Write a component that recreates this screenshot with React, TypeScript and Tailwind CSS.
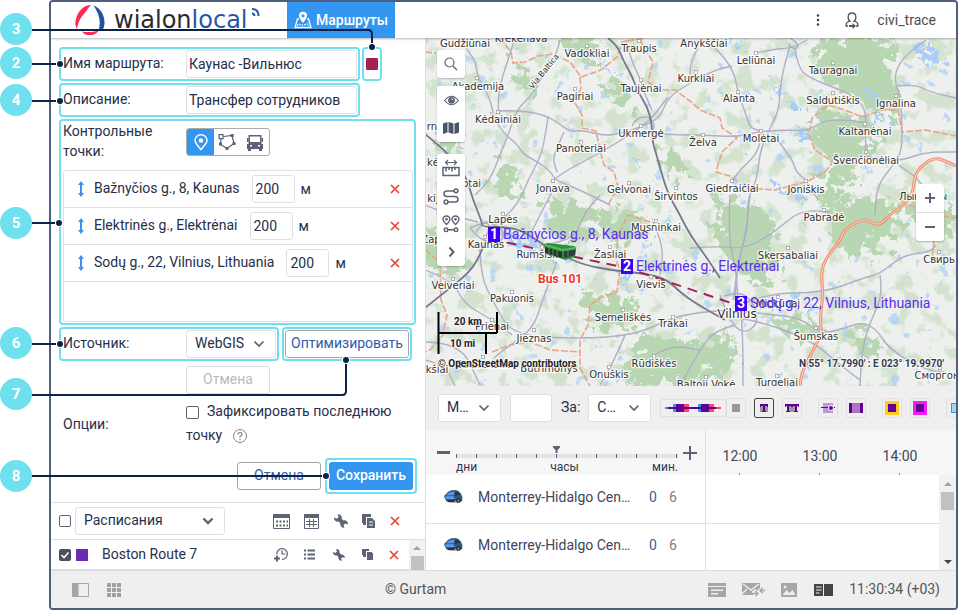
import type { ReactNode } from 'react';

type Place = { name: string; x: number; y: number; dot?: [number, number]; size?: number };

const places: Place[] = [
  { name: 'Gudžiūnai', x: 465, y: 47 },
  { name: 'Krekenava', x: 521, y: 42 },
  { name: 'Vadokliai', x: 587, y: 57, dot: [587, 46] },
  { name: 'Traupis', x: 639, y: 52, dot: [639, 41] },
  { name: 'Anykščiai', x: 704, y: 47 },
  { name: 'Leliūnai', x: 756, y: 64, dot: [756, 53] },
  { name: 'Tauragnai', x: 833, y: 74, dot: [833, 63] },
  { name: 'Akademija', x: 478, y: 90, dot: [477, 78] },
  { name: 'Kurkliai', x: 696, y: 82, dot: [696, 72] },
  { name: 'Taujėnai', x: 641, y: 92, dot: [641, 80] },
  { name: 'Alanta', x: 739, y: 102, dot: [738, 92] },
  { name: 'Saldutiškis', x: 833, y: 104, dot: [833, 93] },
  { name: 'Ignalina', x: 896, y: 107, dot: [896, 96] },
  { name: 'Pagiriai', x: 575, y: 100, dot: [575, 89] },
  { name: 'Kėdainiai', x: 498, y: 123, dot: [498, 112] },
  { name: 'Kaltanėnai', x: 865, y: 135, dot: [865, 124] },
  { name: 'Ukmergė', x: 641, y: 137, dot: [641, 126] },
  { name: 'Želva', x: 703, y: 146, dot: [703, 135] },
  { name: 'Molėtai', x: 761, y: 142, dot: [761, 131] },
  { name: 'Panoteriai', x: 581, y: 152, dot: [581, 142] },
  { name: 'Švenčionėliai', x: 866, y: 164, dot: [866, 152] },
  { name: 'rna', x: 435, y: 130 },
  { name: 'kė', x: 433, y: 166 },
  { name: 'kij', x: 433, y: 202 },
  { name: 'Žap', x: 431, y: 243 },
  { name: 'Babtai', x: 465, y: 187 },
  { name: 'Jonava', x: 553, y: 192, dot: [553, 181] },
  { name: 'Gelvonai', x: 629, y: 193, dot: [629, 183] },
  { name: 'Širvintos', x: 676, y: 200, dot: [676, 188] },
  { name: 'Giedraičiai', x: 732, y: 192, dot: [732, 181] },
  { name: 'Joniškis', x: 806, y: 193, dot: [806, 181] },
  { name: 'Лынтупы', x: 923, y: 200 },
  { name: 'Lapės', x: 503, y: 223, dot: [503, 214] },
  { name: 'Musninkai', x: 656, y: 231, dot: [656, 221] },
  { name: 'Pabradė', x: 824, y: 221, dot: [824, 210] },
  { name: 'Kaunas', x: 486, y: 248, dot: [485, 237], size: 10 },
  { name: 'Rumšiškės', x: 543, y: 258, dot: [542, 247] },
  { name: 'Žasliai', x: 610, y: 258, dot: [610, 247] },
  { name: 'Skersabaliai', x: 788, y: 259, dot: [788, 248] },
  { name: 'Свирь', x: 939, y: 263, dot: [939, 252] },
  { name: 'Veiveriai', x: 453, y: 289, dot: [453, 279] },
  { name: 'Vievis', x: 651, y: 288, dot: [651, 277] },
  { name: 'Pakuonis', x: 512, y: 302, dot: [512, 292] },
  { name: 'Mickūnai', x: 778, y: 307, dot: [778, 297] },
  { name: 'Vilnius', x: 737, y: 318, size: 12 },
  { name: 'Semeliškės', x: 623, y: 321, dot: [623, 310] },
  { name: 'Trakai', x: 673, y: 327, dot: [673, 317] },
  { name: 'Prienai', x: 492, y: 330, dot: [492, 320] },
  { name: 'Jieznas', x: 534, y: 342, dot: [534, 330] },
  { name: 'Šumskas', x: 816, y: 340, dot: [816, 328] },
  { name: 'Balbieriškis', x: 484, y: 368, dot: [483, 357] },
  { name: 'kšiai', x: 437, y: 373 },
  { name: 'Butrimonys', x: 549, y: 372, dot: [549, 361] },
  { name: 'Onuškis', x: 609, y: 378, dot: [609, 367] },
  { name: 'Rūdiškės', x: 654, y: 367, dot: [654, 356] },
  { name: 'Сморгонь', x: 940, y: 379, dot: [940, 368] },
  { name: 'Baltoji Vokė', x: 706, y: 388, dot: [706, 377] },
  { name: 'Turgeliai', x: 777, y: 386, dot: [777, 376] },
];

const roads = [
  '515,38 506,66 499,88 498,110 500,114',
  '462,40 468,52 475,60 478,78 490,98 494,118',
  '560,40 556,57 543,75 532,95 517,109 510,130 500,155 490,180 475,195',
  '498,111 518,110 545,115 560,124 570,132 582,130 605,136 622,133 641,127 660,118 668,97 690,83 715,70 732,66',
  '490,112 502,132 517,144 524,155 538,162 551,172 555,180 580,190 610,205',
  '548,117 544,145 538,162 528,180 520,200 505,218 490,228',
  '564,132 556,150 553,160 557,172',
  '553,181 560,174 590,158 612,146 641,127 652,118 668,97',
  '626,40 631,60 640,78 644,92 652,110',
  '790,46 781,75 779,110 772,124 760,150 757,180 747,200 748,230 738,260 735,300',
  '756,53 775,49 792,48 807,40',
  '795,48 798,68 810,78 835,88 850,94 862,104 866,115 865,124 866,152',
  '790,38 800,44 795,50 788,44',
  '715,48 732,65 738,92 746,115 750,128 761,131',
  '698,48 690,62 690,83',
  '641,132 672,135 703,135 738,137 761,131 790,130 808,131 824,120 850,120 865,123',
  '775,137 792,158 796,172 806,180 818,200',
  '761,131 761,150 740,170 732,181',
  '926,40 905,55 895,72 896,87 900,94 902,120 902,150 895,163 877,185 875,215',
  '897,86 915,84 930,92 956,98',
  '860,155 895,163 925,152 956,152',
  '895,163 915,175 925,190',
  '480,245 480,275 495,305 512,335 578,339 635,335 672,318 700,312 733,310',
  '557,262 543,298 533,330 500,352 484,368',
  '425,270 452,280 465,305 490,318 512,335',
  '545,245 575,240 583,215 600,195',
  '553,190 540,215 530,235',
  '425,342 460,342 480,385',
  '653,222 664,245 660,275',
  '625,335 612,365 600,385',
  '653,356 670,345 700,350',
  '730,195 728,235 736,270 738,300',
  '750,195 747,228 738,265 733,300',
  '690,248 720,246 745,249 775,232 800,210 830,212',
  '740,305 767,293 823,293 863,278 880,274 903,255 930,252 936,245',
  '740,318 760,322 790,332 817,345 840,365 860,380',
  '745,312 770,314 800,318 822,334 845,328 863,322 877,330 890,350 925,370 945,372',
  '880,275 883,295 870,322 862,350 860,386',
  '741,312 743,340 743,386',
  '735,325 715,330 700,350 680,386',
  '720,295 728,318 742,334 758,325 755,305 742,292 724,296',
  '470,228 480,240 495,244 505,238 500,226 484,222 470,228',
  '476,232 486,218 490,228 484,240',
  '425,205 450,215 478,222',
  '425,360 445,365 455,386',
  '632,126 636,118 650,116 656,128 646,134 634,132',
];

const highways = [
  '608,38 617,45 623,60 632,76 638,92 648,108 652,125 652,140 658,160 667,192 680,215 690,235 705,255 720,278',
  '425,134 445,150 465,173 473,200 482,222 482,227 508,227 525,232 545,246 568,258 585,265 610,270 640,273 665,278 680,292 695,303 725,320',
  '425,308 445,292 470,272 480,255 486,240',
];

const mainRoad =
  '956,166 950,163 935,157 922,165 915,175 914,185 911,198 900,208 890,214 883,223 875,225 865,218 848,227 842,234 840,241 826,258 821,272 823,295 820,320 822,334 812,352 802,372 800,386';

const borders = [
  '425,52 436,53',
  '500,38 511,52 513,63 525,62 538,56 553,54 570,62 581,77 601,70 617,57 622,42 645,38',
  '580,77 581,88 575,103 582,115 582,128 596,131 600,150 604,165 614,172 618,187 608,205',
  '640,40 653,62 648,82 660,90 675,90 690,101 700,110 720,118 722,128 737,138 722,152 716,172 730,176 747,188 775,190 806,182 825,172 833,162 815,150 809,135 812,118 828,105 845,110 862,117 882,110 898,110 902,132 925,130 956,136',
  '650,222 628,215 618,235 616,260 620,270 617,292 600,298 590,305 588,325 580,340 580,368 590,386',
  '425,250 440,262 441,300 447,315 443,335 430,350 425,352',
  '492,352 510,345 530,342 550,350 580,352',
  '908,205 925,210 940,216 956,218',
  '934,240 932,260',
];

const forests = [
  'M820 38 L895 38 L890 75 L905 100 L885 118 L850 95 L815 75 Z',
  'M815 108 L850 115 L880 125 L860 165 L835 205 L812 198 L835 165 L812 140 Z',
  'M518 64 L530 66 L528 92 L516 88 Z',
  'M610 75 L632 85 L628 105 L608 100 Z',
  'M560 38 L600 38 L590 60 L565 50 Z',
  'M660 148 L678 152 L690 172 L665 178 Z',
  'M548 200 L600 205 L590 235 L560 240 L545 225 Z',
  'M720 200 L760 205 L780 235 L770 285 L740 275 L715 240 Z',
  'M825 205 L870 195 L905 205 L890 235 L850 262 L835 240 Z',
  'M425 225 L445 235 L470 260 L455 275 L425 265 Z',
  'M640 335 L690 340 L700 386 L625 386 L630 355 Z',
  'M690 345 L735 335 L730 370 L695 380 Z',
  'M850 330 L880 335 L875 355 L855 352 Z',
  'M500 160 L520 170 L512 200 L492 192 Z',
  'M770 320 L815 318 L825 335 L790 340 Z',
  'M585 295 L640 300 L630 325 L590 330 Z',
  'M440 135 L458 140 L455 158 L440 155 Z',
  'M900 195 L956 205 L956 235 L915 225 Z',
  'M600 215 L645 210 L640 240 L605 238 Z',
];

const lakes = [
  'M915 46 L935 44 L940 58 L922 64 Z',
  'M732 40 L742 40 L738 50 L731 47 Z',
  'M600 60 L608 64 L604 70 Z',
  'M636 160 L641 158 L640 170 Z',
  'M770 85 L785 88 L776 95 Z',
  'M800 128 L812 132 L806 146 L797 140 Z',
  'M870 90 L880 95 L874 105 Z',
  'M878 115 L888 112 L880 130 L874 126 Z',
  'M622 265 L628 270 L627 292 L622 286 Z',
  'M505 236 L530 240 L545 248 L520 250 L505 243 Z',
  'M806 308 L815 310 L812 316 L804 315 Z',
  'M770 180 L782 184 L775 190 Z',
  'M795 190 L806 196 L799 204 Z',
  'M788 100 L800 106 L792 112 Z',
];

const callouts = [
  { n: 3, className: 'top-[13px]' },
  { n: 2, className: 'top-[47px]' },
  { n: 4, className: 'top-[84px]' },
  { n: 5, className: 'top-[207px]' },
  { n: 6, className: 'top-[327px]' },
  { n: 7, className: 'top-[378px]' },
  { n: 8, className: 'top-[460px]' },
];

const calloutLines = [
  { d: 'M32 30H368Q372 30 372 34V47', x: 372, y: 47 },
  { d: 'M32 64H60', x: 60, y: 64 },
  { d: 'M32 101H60', x: 60, y: 101 },
  { d: 'M32 223H59', x: 59, y: 223 },
  { d: 'M32 344H60', x: 60, y: 344 },
  { d: 'M32 395H342Q346 395 346 391V360', x: 346, y: 360 },
  { d: 'M32 476H326', x: 326, y: 476 },
];

const checkpoints = [
  { name: 'Bažnyčios g., 8, Kaunas', radius: 200 },
  { name: 'Elektrinės g., Elektrėnai', radius: 200 },
  { name: 'Sodų g., 22, Vilnius, Lithuania', radius: 200 },
];

const units = ['Monterrey-Hidalgo Cen…', 'Monterrey-Hidalgo Cen…'];
const hours = ['12:00', '13:00', '14:00'];

// Turns a list of points into a curve that passes through the segment midpoints
function smooth(points: string): string {
  const pts = points.split(' ').map((p) => p.split(',').map(Number));
  let d = `M${pts[0][0]} ${pts[0][1]}`;
  for (let i = 1; i < pts.length - 1; i++) {
    const [x, y] = pts[i];
    const [nx, ny] = pts[i + 1];
    d += `Q${x} ${y} ${(x + nx) / 2} ${(y + ny) / 2}`;
  }
  const last = pts[pts.length - 1];
  return `${d}L${last[0]} ${last[1]}`;
}

function Chevron({ bold = false }: { bold?: boolean }) {
  return (
    <svg width="12" height="8" viewBox="0 0 12 8" fill="none" stroke="#5b6375" strokeWidth={bold ? 2.4 : 1.7} className="shrink-0">
      <path d="M1.5 1.5 6 6l4.5-4.5" />
    </svg>
  );
}

function Cross() {
  return (
    <svg width="10" height="10" viewBox="0 0 10 10" stroke="#ee4136" strokeWidth="1.7">
      <path d="m1 1 8 8M9 1 1 9" />
    </svg>
  );
}

function Wrench({ size = 14 }: { size?: number }) {
  return (
    <svg width={size} height={size} viewBox="0 0 14 14" fill="#5b6375">
      <path d="M0 3.600 2.800 4.700 4.600 3 3.700.2C6.300-.3 8.300 2 7.700 4.700l1.800 1.700c2.600-.5 4.600 1.600 4.300 4.100l-2.600-1-1.700 1.500.9 2.800c-2.500.4-4.500-1.800-4-4.300L4.700 7.600C2.200 8.200-.2 6.200 0 3.600Z" />
    </svg>
  );
}

function IconButton({ label, className, children }: { label: string; className: string; children: ReactNode }) {
  return (
    <button type="button" aria-label={label} className={`flex shrink-0 items-center justify-center ${className}`}>
      {children}
    </button>
  );
}

function Frame({ className = '', children }: { className?: string; children: ReactNode }) {
  return <div className={`rounded border-2 border-[#6ee0ee] ${className}`}>{children}</div>;
}

function Select({ label, value, className, bold }: { label: string; value: string; className: string; bold?: boolean }) {
  return (
    <div className={`relative flex h-7 items-center rounded-[3px] border border-[#dfe0e2] bg-white ${className}`}>
      <select aria-label={label} className="h-full w-full appearance-none bg-transparent pb-0.5 pl-2 text-[14px] outline-none">
        <option>{value}</option>
      </select>
      <span className="pointer-events-none absolute right-[10px]">
        <Chevron bold={bold} />
      </span>
    </div>
  );
}

function Logo() {
  return (
    <div className="flex items-start pl-6">
      <svg width="31" height="31" viewBox="0 0 31 31" className="mt-[2px] shrink-0">
        <path d="M16 1C8 1 2 8 .500 17c-.3 3 0 6 1.500 8 1-7 4-12 7-15 2.500-3 4-6 7-9Z" fill="#fb2c50" />
        <path d="M18.500 1.500c6.500 2 11 9 11 17 0 3-.8 6-2 8l-3.500-2c2-7 0-15-5.500-23Z" fill="#2053a4" />
        <path d="M7 27.500c5 1 11 1 17-1.500-3 6-13 7.500-17 1.500Z" fill="#fb2c50" />
      </svg>
      <span className="ml-2 font-['DejaVu_Sans'] text-[24px] leading-9 text-[#2b2930]">
        wialon<span className="text-[#2457a8]">local</span>
      </span>
      <svg width="8" height="8" viewBox="0 0 8 8" fill="none" stroke="#2457a8" strokeWidth="2" className="mt-1.5 ml-1 shrink-0">
        <path d="M0 1c4 0 6.500 2.500 6.500 7M0 5.500c1.500 0 2.500 1 2.500 2.500" />
      </svg>
    </div>
  );
}

function Header() {
  return (
    <header className="relative z-10 flex h-9 shrink-0 bg-white shadow-[0_1px_2px_rgba(0,0,0,0.3)]">
      <div className="w-[236px] overflow-hidden">
        <Logo />
      </div>
      <button type="button" className="flex h-full w-[108px] items-center gap-1 bg-[#3396f0] pl-[7px] text-[14px] font-medium text-white">
        <svg width="18" height="18" viewBox="0 0 18 18" fill="none" stroke="#fff" strokeWidth="1.3">
          <path d="M5 8H3.500L1 16.500h16L14.500 8H13" />
          <path d="M9 12C6.500 8.500 5 7 5 4.800a4 4 0 0 1 8 0C13 7 11.500 8.500 9 12Z" fill="#fff" stroke="none" />
          <circle cx="9" cy="4.800" r="1.600" fill="#3396f0" stroke="none" />
          <path d="M3 14.500c3-3 5 1 8-1 1.500-1 3-.5 4 1" strokeDasharray="1.500 1" />
        </svg>
        Маршруты
      </button>
      <div className="ml-auto flex items-center pr-5 text-[14px] text-[#4d4d4d]">
        <IconButton label="Меню" className="mr-[15px] h-7 w-6">
          <svg width="4" height="12" viewBox="0 0 4 12" fill="#444">
            <circle cx="2" cy="1.500" r="1.300" />
            <circle cx="2" cy="6" r="1.300" />
            <circle cx="2" cy="10.500" r="1.300" />
          </svg>
        </IconButton>
        <svg width="14" height="17" viewBox="0 0 14 17" fill="none" stroke="#555" strokeWidth="1.300" className="mr-[18px]">
          <path d="M3 14H1c0-3.500 1.200-4 4-4.800C2.500 7.500 2 1 7 1s4.500 6.500 2 8.200c2.800.8 4 1.300 4 4.800h-2" />
          <path d="M4 14h4" strokeWidth="1.800" />
          <path d="m7.500 11 3.500 3-3.500 3Z" fill="#555" stroke="none" />
        </svg>
        civi_trace
      </div>
    </header>
  );
}

function Checkpoints() {
  return (
    <Frame className="w-[357px] p-px pl-0.5">
      <div className="flex h-12">
        <div className="-mt-px w-[123px] leading-5">
          Контрольные
          <br />
          точки:
        </div>
        <div className="mt-1.5 flex h-7 w-[84px] overflow-hidden rounded-[3px] border border-[#a9abb0]">
          <IconButton label="Точка" className="w-[27px] bg-[#3396f0]">
            <svg width="14" height="17" viewBox="0 0 14 17" fill="none" stroke="#fff" strokeWidth="1.500">
              <path d="M7 15.500C3.500 11.500 1 9 1 6.500a6 5.700 0 0 1 12 0C13 9 10.500 11.500 7 15.500Z" />
              <circle cx="7" cy="6.500" r="1.600" fill="#fff" />
            </svg>
          </IconButton>
          <IconButton label="Геозона" className="w-[26px]">
            <svg width="18" height="18" viewBox="0 0 18 18" fill="none" stroke="#5b6375" strokeWidth="1.200">
              <path d="M5.500 3.500 14 2.500l2 8-7 5-6.500-4L3 6" />
              <path d="M1.100 1.600h4v4h-4z" />
              <path d="M12.700 1h3v3h-3zM14.500 9h3v3h-3zM7.500 14h3v3h-3zM1 9.500h3v3H1z" fill="#5b6375" stroke="none" />
            </svg>
          </IconButton>
          <IconButton label="Остановка" className="w-[30px]">
            <svg width="16" height="17" viewBox="0 0 16 17" fill="#5b6375">
              <path fillRule="evenodd" d="M1.500 1h13v9l1.500 0v5h-1v2h-3v-2H4v2H1v-2H0v-5h1.500ZM3 2.500V8h10V2.500ZM3 11v1.500h2V11Zm8 0v1.500h2V11Z" />
              <path d="M0 4h1.500v4H0zM14.500 4H16v4h-1.500z" />
            </svg>
          </IconButton>
        </div>
      </div>
      <ul className="h-[152px] w-[350px] rounded-[3px] border border-[#dfe0e2]">
        {checkpoints.map((point) => (
          <li key={point.name} className="flex h-[37px] items-center border-b border-[#dfe0e2] pr-3 pl-[13px]">
            <svg width="8" height="16" viewBox="0 0 8 16" fill="#3d8ff0" className="mr-[9px] shrink-0">
              <path d="M4 0 7 4H5v8h2l-3 4-3-4h2V4H1Z" />
            </svg>
            <span className="-mt-0.5">{point.name}</span>
            <input
              type="text"
              aria-label={`Радиус ${point.name}`}
              defaultValue={point.radius}
              className="mr-1.5 ml-3 h-7 w-[43px] rounded-[3px] border border-[#dfe0e2] px-[3px] text-[14px] outline-none"
            />
            м
            <IconButton label={`Удалить ${point.name}`} className="ml-auto">
              <Cross />
            </IconButton>
          </li>
        ))}
      </ul>
    </Frame>
  );
}

function RoutePanel() {
  const field = 'h-7 w-[171px] rounded-[3px] border border-[#dfe0e2] px-0.5 text-[14px] outline-none';
  const label = 'w-[123px] pb-0.5';
  return (
    <section className="flex w-[375px] shrink-0 flex-col border-r border-[#dcdde0] bg-white">
      <form className="flex flex-col items-start gap-0.5 pt-[9px] pr-2 pl-2" onSubmit={(e) => e.preventDefault()}>
        <div className="flex gap-0.5">
          <Frame className="flex items-center p-px pl-0.5">
            <label htmlFor="route-name" className={label}>Имя маршрута:</label>
            <input id="route-name" type="text" defaultValue="Каунас -Вильнюс" className={field} />
          </Frame>
          <Frame className="flex w-5 items-center justify-center">
            <button type="button" aria-label="Цвет маршрута" className="size-3 shrink-0 rounded-[1px] bg-[#a42152]" />
          </Frame>
        </div>
        <Frame className="flex items-center p-px pl-0.5">
          <label htmlFor="route-desc" className={label}>Описание:</label>
          <input id="route-desc" type="text" defaultValue="Трансфер сотрудников" className={field} />
        </Frame>
        <Checkpoints />
        <div className="flex gap-[3px]">
          <Frame className="flex items-center p-px pl-0.5">
            <span className={label}>Источник:</span>
            <Select label="Источник" value="WebGIS" className="w-[90px]" />
          </Frame>
          <Frame className="p-px">
            <button type="button" className="block h-7 w-[124px] rounded-[3px] border border-[#a3a5aa] pb-0.5 text-[14px] text-[#2f5ca8]">
              Оптимизировать
            </button>
          </Frame>
        </div>
        <button type="button" disabled className="mt-[3px] ml-[127px] h-7 w-[84px] rounded-[3px] border border-[#dfe0e2] pb-0.5 text-[#b9bbbf]">
          Отмена
        </button>
        <div className="mt-[3px] flex items-center pl-1">
          <span className="w-[123px] pt-0.5">Опции:</span>
          <div className="w-[220px] leading-6">
            <input id="fix-last" type="checkbox" className="mr-2 size-[13px] appearance-none rounded-[2px] border border-[#5b6375] align-[-3px]" />
            <label htmlFor="fix-last">Зафиксировать последнюю точку</label>
            <svg width="14" height="14" viewBox="0 0 14 14" className="ml-[11px] inline-block align-[-3px]">
              <circle cx="7" cy="7" r="6.500" fill="none" stroke="#7d828c" />
              <path d="M5 5.500q0-2 2-2t2 1.800Q9 6.500 7 7.500v1.200M7 10v1.200" fill="none" stroke="#7d828c" strokeWidth="1.200" />
            </svg>
          </div>
        </div>
        <div className="mt-[9px] mb-2 flex items-center gap-1 self-end">
          <button type="button" className="h-7 w-[84px] rounded-[3px] border border-[#a3a5aa] pb-0.5 text-[#2f5ca8]">Отмена</button>
          <Frame className="p-0.5">
            <button type="submit" className="block h-7 w-[84px] rounded-[3px] bg-[#3396f0] pb-0.5 font-medium text-white">Сохранить</button>
          </Frame>
        </div>
      </form>

      <div className="flex h-[38px] shrink-0 items-center border-t border-b border-[#dfe0e2] pl-2">
        <input type="checkbox" aria-label="Выбрать все маршруты" className="mr-1 size-3 appearance-none rounded-[2px] border border-[#5b6375]" />
        <Select label="Раздел" value="Расписания" className="w-[150px]" bold />
        <div className="ml-auto flex items-center">
          <IconButton label="Календарь" className="w-[30px]">
            <svg width="17" height="15" viewBox="0 0 17 15">
              <path d="M.5.5h16v14H.5z" fill="#fff" stroke="#5b6375" />
              <path d="M0 0h17v4H0z" fill="#5b6375" />
              <path d="M3 7.500h12M3 11.500h12" stroke="#5b6375" strokeWidth="2" strokeDasharray="2 1.500" />
            </svg>
          </IconButton>
          <IconButton label="Таблица" className="w-[30px]">
            <svg width="15" height="15" viewBox="0 0 15 15">
              <path d="M.5.5h14v14H.5z" fill="#fff" stroke="#5b6375" />
              <path d="M0 0h15v4H0z" fill="#5b6375" />
              <path d="M2 7.500h11M2 10.500h11M5.500 5v8M9.500 5v8" stroke="#5b6375" />
            </svg>
          </IconButton>
          <IconButton label="Свойства" className="w-[29px]">
            <Wrench />
          </IconButton>
          <IconButton label="Копировать" className="w-[27px]">
            <svg width="13" height="14" viewBox="0 0 13 14" fill="#5b6375">
              <path d="M0 0h9v3H4v8H1V9H0Z" />
              <path fillRule="evenodd" d="M5 4h5l3 3v7H5Zm2 3.500v1h4v-1Zm0 3v1h4v-1Z" />
            </svg>
          </IconButton>
          <IconButton label="Удалить все" className="mr-[17px] w-[26px]">
            <Cross />
          </IconButton>
        </div>
      </div>

      <div className="flex min-h-0 flex-1">
        <div className="min-w-0 flex-1">
          <div className="flex h-[30px] items-center border-b border-[#dfe0e2] pl-2">
            <span className="relative flex size-3">
              <input type="checkbox" defaultChecked aria-label="Boston Route 7" className="size-3 appearance-none rounded-[2px] bg-[#4a5060]" />
              <svg width="12" height="12" viewBox="0 0 12 12" fill="none" stroke="#fff" strokeWidth="1.600" className="pointer-events-none absolute inset-0">
                <path d="m2.500 6 2.500 2.500 4.500-5" />
              </svg>
            </span>
            <span className="ml-[5px] size-3 bg-[#6a2bb5]" />
            <span className="ml-3.5 pb-0.5">Boston Route 7</span>
            <div className="ml-auto flex items-center">
              <IconButton label="Добавить расписание" className="w-[30px]">
                <svg width="15" height="15" viewBox="0 0 15 15" fill="none" stroke="#5b6375" strokeWidth="1.200">
                  <path d="M2.800 7a5.300 5.300 0 1 1 5.200 5.300" />
                  <path d="M8 3.500V7h3.500" />
                  <path d="M0 11.500h6M3 8.500v6" strokeWidth="2" />
                </svg>
              </IconButton>
              <IconButton label="Рейсы" className="w-[27px]">
                <svg width="11" height="11" viewBox="0 0 11 11" stroke="#5b6375" strokeWidth="2">
                  <path d="M0 1.500h2M3.500 1.500H11M0 5.500h2M3.500 5.500H11M0 9.500h2M3.500 9.500H11" />
                </svg>
              </IconButton>
              <IconButton label="Свойства маршрута" className="w-8">
                <Wrench size={12} />
              </IconButton>
              <IconButton label="Копировать маршрут" className="w-6">
                <svg width="11" height="11" viewBox="0 0 11 11" fill="#5b6375">
                  <path d="M0 0h7v2H4v6H1V6H0ZM5 3h5v1h1v7H5Z" />
                </svg>
              </IconButton>
              <IconButton label="Удалить маршрут" className="mr-px w-[29px]">
                <Cross />
              </IconButton>
            </div>
          </div>
        </div>
        <div className="flex w-4 flex-col items-center bg-[#f1f1f1]">
          <svg width="8" height="4" viewBox="0 0 8 4" fill="#a3a3a3" className="mt-1.5 mb-1.5">
            <path d="M0 4 4 0l4 4Z" />
          </svg>
          <div className="w-[13px] flex-1 bg-[#c1c1c1]" />
        </div>
      </div>
    </section>
  );
}

function MapCanvas() {
  return (
    <svg className="absolute inset-0 h-full w-full bg-[#edf0ec]" fontFamily="'DejaVu Sans', sans-serif" role="img" aria-label="Карта">
      <defs>
        <filter id="woods" x="0" y="0" width="100%" height="100%">
          <feTurbulence type="fractalNoise" baseFrequency="0.055" numOctaves="5" seed="23" />
          <feColorMatrix values="0 0 0 0 0.49  0 0 0 0 0.67  0 0 0 0 0.45  8 0 0 0 -4.2" />
        </filter>
        <filter id="ponds" x="0" y="0" width="100%" height="100%">
          <feTurbulence type="fractalNoise" baseFrequency="0.08" numOctaves="3" seed="4" />
          <feColorMatrix values="0 0 0 0 0.4  0 0 0 0 0.62  0 0 0 0 0.96  14 0 0 0 -9.7" />
        </filter>
        <filter id="rough" x="-10%" y="-10%" width="120%" height="120%">
          <feTurbulence type="fractalNoise" baseFrequency="0.1" numOctaves="5" seed="2" />
          <feDisplacementMap in="SourceGraphic" scale="44" />
        </filter>
      </defs>
      <rect width="100%" height="100%" filter="url(#woods)" opacity="0.5" />
      <rect width="100%" height="100%" filter="url(#ponds)" opacity="0.7" />
      <g transform="translate(-426 -38)" fill="none" strokeLinejoin="round">
        <g filter="url(#rough)">
          <g fill="#b9d6b2">
            {forests.map((d) => <path key={d} d={d} />)}
          </g>
          <g fill="#a9cdfa">
            {lakes.map((d) => <path key={d} d={d} />)}
          </g>
        </g>
        <g stroke="#e8a589" strokeWidth="1.600" strokeDasharray="7 2">
          {borders.map((p) => <polyline key={p} points={p} />)}
        </g>
        <g stroke="#b0afc6" strokeWidth="1.400">
          {roads.map((p) => <path key={p} d={smooth(p)} />)}
        </g>
        <g stroke="#77788f" strokeWidth="1.800">
          {highways.map((p) => <path key={p} d={smooth(p)} />)}
        </g>
        <path d={smooth(mainRoad)} stroke="#f48c6c" strokeWidth="3" />
        <path d={smooth(mainRoad)} stroke="#fbd9cc" />
        <polyline points="490,239 627,268 740,306" stroke="#a42152" strokeWidth="2" strokeDasharray="10 7" />

        <g stroke="#fff" strokeOpacity="0.8" strokeWidth="2.500" fill="#333" fontSize="10" textAnchor="middle" paintOrder="stroke">
          {places.map((p) => (
            <g key={p.name}>
              {p.dot && <rect x={p.dot[0] - 1.5} y={p.dot[1] - 1.5} width="3" height="3" fill="#fff" stroke="#666a78" strokeOpacity="1" strokeWidth="1" />}
              <text x={p.x} y={p.y} fontSize={p.size ?? 10}>{p.name}</text>
            </g>
          ))}
          <text transform="translate(546 73) rotate(-51)" fontSize="8">Via Baltica</text>
        </g>

        <g>
          <path d="M544 246q0-3 4-3l26 3q3 1 2 5l-1 6-10 3-19-7Z" fill="#2f8f3f" />
          <path d="m545 247 17 5v6l-17-5Z" fill="#23352b" />
          <path d="m564 251 11-1v5l-11 3Z" fill="#323a3d" />
          <path d="m545 245 18 5 12-2" stroke="#55b960" strokeWidth="2" />
          <path d="M549 248v6M553 249v6M557 250v6M568 250v6" stroke="#49985a" />
        </g>

        <g fontFamily="Roboto, sans-serif">
          <text x="538" y="283" fontSize="12" fontWeight="700" fill="#f0332b" stroke="#fff" strokeWidth="2.500" paintOrder="stroke">Bus 101</text>
          {[
            { x: 488, y: 227, label: 'Bažnyčios g., 8, Kaunas' },
            { x: 621, y: 259, label: 'Elektrinės g., Elektrėnai' },
            { x: 735, y: 296, label: 'Sodų g., 22, Vilnius, Lithuania' },
          ].map((stop, i) => (
            <g key={stop.label}>
              <rect x={stop.x} y={stop.y} width="12" height="15" fill="#3d00f5" />
              <text x={stop.x + 6} y={stop.y + 12} fontSize="14" fontWeight="700" fill="#fff" textAnchor="middle">{i + 1}</text>
              <text x={stop.x + 15} y={stop.y + 12} fontSize="14" fill="#5a2cf0">{stop.label}</text>
            </g>
          ))}
          <path d="M438.500 312v42M438 333h59M497 312v21M486 333v21" stroke="#000" strokeWidth="2" />
          <g fontSize="10" fontWeight="700" fill="#222" stroke="#fff" strokeOpacity="0.7" strokeWidth="2" paintOrder="stroke">
            <text x="454" y="325">20 km</text>
            <text x="450" y="347">10 mi</text>
            <text x="438" y="367">© OpenStreetMap contributors</text>
            <text x="799" y="367" fill="#333b4d">N 55° 17.7990' : E 023° 19.9970'</text>
          </g>
        </g>
      </g>
    </svg>
  );
}

function MapPanel() {
  const box = 'rounded-[3px] bg-white shadow-[0_1px_2px_rgba(0,0,0,0.25)]';
  const stroke = { fill: 'none', stroke: '#5b6375', strokeWidth: 1.5 };
  return (
    <div className="relative min-h-0 flex-1 overflow-hidden">
      <MapCanvas />
      <div className="absolute top-3 left-[11px] flex w-7 flex-col">
        <IconButton label="Поиск" className={`mb-2 h-7 ${box}`}>
          <svg width="14" height="14" viewBox="0 0 14 14" {...stroke} strokeWidth="1.200">
            <circle cx="5.500" cy="5.500" r="4.500" />
            <path d="m9 9 4 4" />
          </svg>
        </IconButton>
        <div className={`mb-3 ${box}`}>
          <IconButton label="Слои" className="h-7 w-7">
            <svg width="15" height="11" viewBox="0 0 15 11" {...stroke} strokeWidth="1.200">
              <path d="M.7 5.500Q7.500-3 14.300 5.500 7.500 14 .7 5.500Z" />
              <circle cx="7.500" cy="5.300" r="2.800" fill="#5b6375" />
              <circle cx="8.300" cy="4.300" r=".8" fill="#fff" stroke="none" />
            </svg>
          </IconButton>
          <IconButton label="Источник карты" className="h-7 w-7">
            <svg width="16" height="12" viewBox="0 0 16 12" fill="#4a556c">
              <path d="M0 1.500 4.500 0v10.500L0 12ZM5.500 0l5 1.500V12l-5-1.500ZM11.500 1.500 16 0v10.500L11.500 12Z" />
            </svg>
          </IconButton>
        </div>
        <div className={box}>
          <IconButton label="Измерить расстояние" className="h-7 w-7">
            <svg width="18" height="18" viewBox="0 0 18 18" {...stroke}>
              <path d="M3.500 3.500h11M6 1 3.500 3.500 6 6M12 1l2.500 2.500L12 6" strokeWidth="1.200" />
              <path d="M1 8.500h16v8H1zM4 8.500v4M7 8.500v2.500M10 8.500v4M13 8.500v2.500" />
            </svg>
          </IconButton>
          <IconButton label="Построить маршрут" className="h-7 w-7">
            <svg width="16" height="17" viewBox="0 0 16 17" {...stroke}>
              <circle cx="13" cy="2.800" r="1.900" />
              <circle cx="3" cy="14" r="1.900" />
              <path d="M11 3H4C0 3 0 8.500 4 8.500h8c4 0 4 5.500 0 5.500H5" />
            </svg>
          </IconButton>
          <IconButton label="Адреса" className="h-7 w-7">
            <svg width="18" height="18" viewBox="0 0 18 18" {...stroke} strokeWidth="1.400">
              <path d="M4.500 9.500C2.500 7.500 1 6 1 4.300a3.500 3.300 0 0 1 7 0c0 1.700-1.500 3.200-3.500 5.200ZM13.500 9.500C11.500 7.500 10 6 10 4.300a3.500 3.300 0 0 1 7 0c0 1.700-1.500 3.200-3.500 5.200Z" />
              <circle cx="4.500" cy="4.300" r=".7" />
              <circle cx="13.500" cy="4.300" r=".7" />
              <circle cx="4" cy="14.800" r="1.800" />
              <circle cx="14" cy="14.800" r="1.800" />
              <path d="M6 14.800h6" />
            </svg>
          </IconButton>
          <IconButton label="Развернуть" className="h-7 w-7">
            <svg width="7" height="12" viewBox="0 0 7 12" {...stroke} strokeWidth="2">
              <path d="m1.500 1.500 4 4.500-4 4.500" />
            </svg>
          </IconButton>
        </div>
      </div>
      <div className={`absolute top-[146px] right-3 w-7 ${box}`}>
        <IconButton label="Приблизить" className="h-7 w-7">
          <svg width="12" height="12" viewBox="0 0 12 12" {...stroke} strokeWidth="2">
            <path d="M1 6h10M6 1v10" />
          </svg>
        </IconButton>
        <IconButton label="Отдалить" className="h-[29px] w-7 border-t border-[#dfe0e2]">
          <svg width="12" height="2" viewBox="0 0 12 2" {...stroke} strokeWidth="2">
            <path d="M1 1h10" />
          </svg>
        </IconButton>
      </div>
    </div>
  );
}

function TimelineToolbar() {
  const item = 'h-5 w-5 rounded-[2px] border border-[#e0e0e0]';
  return (
    <div className="flex h-11 shrink-0 items-center overflow-hidden bg-[#efefef] pl-3">
      <Select label="Маршрут" value="М…" className="w-[63px] shrink-0" />
      <input type="text" aria-label="Фильтр" className="mr-[9px] ml-[9px] h-7 w-[42px] shrink-0 rounded-[3px] border border-[#dfe0e2] bg-white px-1 outline-none" />
      <span className="pb-0.5">За:</span>
      <Select label="Период" value="С…" className="mr-[9px] ml-2 w-[63px] shrink-0" />
      <IconButton label="Линия рейса" className="h-[18px] w-[66px] rounded-[2px] border border-[#e0e0e0]">
        <svg width="56" height="8" viewBox="0 0 56 8">
          <path d="M0 3h3v2H0zM8 0h3v8H8zM33 0h3v8h-3z" fill="#3396f0" />
          <path d="M3 3h48v2H3z" fill="#5f0096" />
          <path d="M11 0h8v8h-8zM36 0h8v8h-8z" fill="#5f0096" />
          <path d="M19 0h5v3h-5zM19 5h5v3h-5zM44 0h5v3h-5zM44 5h5v3h-5zM51 3h5v2h-5z" fill="#ff4266" />
        </svg>
      </IconButton>
      <IconButton label="Без активности" className={`mr-2 ${item}`}>
        <span className="size-2 bg-[#9b9b9f]" />
      </IconButton>
      <IconButton label="Рейсы" className="mr-2 h-5 w-5 rounded-[2px] border border-[#444]">
        <svg width="8" height="8" viewBox="0 0 8 8">
          <path d="M0 0h8v8H0z" fill="#9b9b9f" />
          <path d="M0 0h8v3H7V2H5v5h1v1H2V7h1V2H1v1H0Z" fill="#5f0096" />
        </svg>
      </IconButton>
      <IconButton label="Группы рейсов" className={`mr-4 ${item}`}>
        <svg width="14" height="8" viewBox="0 0 14 8">
          <path d="M3 0h8v8H3z" fill="#9b9b9f" />
          <path d="M0 0h14v3h-1V2h-1v5h1v1H9V7h1V2H8v1H6V2H4v5h1v1H1V7h1V2H1v1H0Z" fill="#5f0096" />
        </svg>
      </IconButton>
      <IconButton label="Опоздания" className={`mr-2 ${item}`}>
        <svg width="14" height="10" viewBox="0 0 14 10">
          <path d="M2 0h10v10H2z" fill="#c495d8" />
          <path d="M0 4.500h14" stroke="#5f0096" />
          <circle cx="10" cy="5" r="2.500" fill="#5f0096" stroke="#fff" />
        </svg>
      </IconButton>
      <IconButton label="Интервалы" className={`mr-4 ${item}`}>
        <svg width="14" height="10" viewBox="0 0 14 10">
          <path d="M0 0h14v10H0z" fill="#5f0096" />
          <path d="M3 0h8v10H3z" fill="#ad74c3" />
        </svg>
      </IconButton>
      <IconButton label="Активные" className={`mr-2 ${item}`}>
        <span className="size-3.5 border-3 border-[#fccb1e] bg-[#5f0096]" />
      </IconButton>
      <IconButton label="Выбранные" className={`mr-4 ${item}`}>
        <span className="size-3.5 border-3 border-[#f81cf4] bg-[#5f0096]" />
      </IconButton>
      <IconButton label="История" className={item}>
        <span className="size-2.5 border border-[#2a9fe0] bg-[#a0d8f0]" />
      </IconButton>
    </div>
  );
}

function Car() {
  return (
    <svg width="19" height="15" viewBox="0 0 19 15">
      <ellipse cx="10" cy="11.500" rx="8.500" ry="2.500" fill="#a5a5a5" />
      <path d="M2 5q3-4 8-4t7 4l1.500 3-.5 4H3L1 10 0 7Z" fill="#33557f" />
      <path d="M4 4.500q3-2.500 7-2l-1 3.500-8 .5Z" fill="#5f95d8" />
      <path d="M11 2.500q3.500 0 5 3.500l-5.500.5Z" fill="#20334d" />
      <path d="M.5 7.500 9 7l2 3-8 1Z" fill="#5a9aee" />
      <path d="M2.500 10.500h8V13H4Z" fill="#273244" />
      <circle cx="14.500" cy="11.500" r="2.300" fill="#222" />
      <circle cx="14.500" cy="11.500" r="1" fill="#aaa" />
    </svg>
  );
}

function Timeline() {
  return (
    <div className="flex h-[140px] shrink-0 flex-col">
      <div className="flex h-[45px] bg-[#f6f6f6]">
        <div className="relative w-[280px] shrink-0 border-r border-[#dfe0e2] pt-3 pl-[11px]">
          <div className="flex items-center">
            <button type="button" aria-label="Уменьшить масштаб" className="mr-1.5 flex h-[21px] w-[13px] items-center">
              <span className="h-[3px] w-full bg-[#5b6375]" />
            </button>
            <div className="relative">
              <svg width="222" height="14" viewBox="0 0 222 14" className="block">
                <path d="M0 8h222v4H0z" fill="#e2e5e6" />
                <path d="M.5 8v4M20.500 8v4M40.500 8v4M60.500 8v4M80.500 8v4M100.500 8v4M120.500 8v4M140.500 8v4M160.500 8v4M180.500 8v4M200.500 8v4M220.500 8v4" stroke="#5b6375" />
                <path d="M97 0h7v1.500L101.500 4v3h-2V4L97 1.500Z" fill="#5b6375" />
              </svg>
              <input type="range" min="0" max="11" defaultValue="5" aria-label="Масштаб" className="absolute inset-0 m-0 w-full opacity-0" />
            </div>
            <IconButton label="Увеличить масштаб" className="ml-[5px] h-[21px] w-3.5">
              <svg width="14" height="14" viewBox="0 0 14 14" stroke="#5b6375" strokeWidth="2">
                <path d="M0 7h14M7 0v14" />
              </svg>
            </IconButton>
          </div>
          <div className="-mt-1 mr-[27px] ml-[19px] flex justify-between text-[12px] leading-4 text-[#30394c]">
            <span>дни</span>
            <span>часы</span>
            <span>мин.</span>
          </div>
        </div>
        <div className="flex overflow-hidden pr-3.5">
          {hours.map((hour) => (
            <div key={hour} className="relative flex w-20 shrink-0 justify-center pt-4 pr-3 text-[#3d475a]">
              {hour}
              <span className="absolute bottom-0 left-[33px] h-0.5 w-px bg-[#8c8f96]" />
            </div>
          ))}
        </div>
      </div>
      <div className="flex min-h-0 flex-1 bg-white">
        <table className="w-full table-fixed border-collapse">
          <tbody>
            {units.map((unit, i) => (
              <tr key={i} className={i === 0 ? 'h-12 border-b border-[#dfe0e2]' : 'h-[47px]'}>
                <td className="w-[279px] border-r border-[#dfe0e2] p-0 pl-[18px]">
                  <div className="-mt-1 flex items-center text-[#3d475a]">
                    <Car />
                    <span className="ml-[15px] w-[171px]">{unit}</span>
                    <span className="w-5 text-[#3b62a0]">0</span>
                    <span className="text-[#7c818b]">6</span>
                  </div>
                </td>
                <td />
              </tr>
            ))}
          </tbody>
        </table>
        <div className="flex w-[17px] shrink-0 flex-col items-center bg-[#f1f1f1] pt-[7px] pb-1.5">
          <svg width="8" height="4" viewBox="0 0 8 4" fill="#a3a3a3">
            <path d="M0 4 4 0l4 4Z" />
          </svg>
          <div className="mt-1.5 h-[18px] w-[13px] bg-[#c1c1c1]" />
          <svg width="8" height="4" viewBox="0 0 8 4" fill="#444" className="mt-auto">
            <path d="m0 0 4 4 4-4Z" />
          </svg>
        </div>
      </div>
    </div>
  );
}

function Footer() {
  return (
    <footer className="flex h-[38px] shrink-0 items-center border-t border-[#dcdde0] bg-[#efefef] pl-[21px] text-[#555]">
      <IconButton label="Скрыть панель" className="mr-[18px]">
        <svg width="17" height="14" viewBox="0 0 17 14" fill="none" stroke="#a6a6a6">
          <path d="M.5.5h16v13H.5z" />
          <path d="M1 1h5v12H1z" fill="#a6a6a6" />
        </svg>
      </IconButton>
      <IconButton label="Приложения" className="mr-[263px]">
        <svg width="15" height="14" viewBox="0 0 15 14" fill="#a0a0a0">
          <path d="M0 0h4v4H0zM5 0h4v4H5zM10 0h4v4h-4zM0 5h4v4H0zM5 5h4v4H5zM10 5h4v4h-4zM0 10h4v4H0zM5 10h4v4H5zM10 10h4v4h-4z" />
        </svg>
      </IconButton>
      <span className="pb-0.5">© Gurtam</span>
      <div className="ml-auto flex items-center pr-4">
        <IconButton label="Уведомления" className="mr-4">
          <svg width="18" height="14" viewBox="0 0 18 14" fill="#a6a6a6">
            <path fillRule="evenodd" d="M0 0h18v3H0ZM0 4h18v10H0ZM3 6.500V8h12V6.500Zm0 3.500v1.500h7V10Z" />
          </svg>
        </IconButton>
        <IconButton label="Сообщения" className="mr-4">
          <svg width="23" height="14" viewBox="0 0 23 14" fill="#a6a6a6">
            <path d="M0 0h18v12H0z" />
            <path d="m1 1 8 6 8-6M0 11l5-5" fill="none" stroke="#efefef" strokeWidth="1.400" />
            <path d="M11 8.500h12v4H11z" fill="#efefef" />
            <path d="M10 9.500h5M12 7l3 2.500-3 2.500M23 8h-4M20 5l-3 3 3 3" fill="none" stroke="#efefef" strokeWidth="3" />
            <path d="M10 10.500h6M13.500 8l2.500 2.500-2.500 2.500M23 7.500h-5M20.500 5 18 7.500l2.500 2.500" fill="none" stroke="#a6a6a6" strokeWidth="1.500" />
          </svg>
        </IconButton>
        <IconButton label="Изображения" className="mr-[17px]">
          <svg width="16" height="14" viewBox="0 0 16 14">
            <path d="M0 0h16v14H0z" fill="#a6a6a6" />
            <path d="m1.500 12 4-5 3 3 3-3 3 5Z" fill="#efefef" />
            <circle cx="4" cy="4" r="1.500" fill="#efefef" />
          </svg>
        </IconButton>
        <IconButton label="Журнал" className="mr-4">
          <svg width="19" height="12" viewBox="0 0 19 12" fill="#444">
            <path d="M0 0h9v12H0zM10 0h9v12h-9z" />
            <path d="M2 3h5.500M2 6h5.500M2 9h3.500" stroke="#efefef" />
          </svg>
        </IconButton>
        <span className="pb-0.5">11:30:34 (+03)</span>
      </div>
    </footer>
  );
}

export default function App() {
  return (
    <div className="relative flex h-screen overflow-hidden bg-white pl-[49px] font-['Roboto',sans-serif] text-[14px] leading-5 text-[#25304a]">
      <div className="flex min-w-0 flex-1 flex-col overflow-hidden rounded border-2 border-[#4f5d7e]">
        <Header />
        <main className="flex min-h-0 flex-1">
          <RoutePanel />
          <section className="flex min-w-0 flex-1 flex-col">
            <MapPanel />
            <TimelineToolbar />
            <Timeline />
          </section>
        </main>
        <Footer />
      </div>

      <div className="pointer-events-none absolute inset-0 z-20">
        <svg className="absolute inset-0 h-full w-full" fill="none" stroke="#0b2347" strokeWidth="2">
          {calloutLines.map((line) => (
            <g key={line.d}>
              <path d={line.d} />
              <circle cx={line.x} cy={line.y} r="4" fill="#fff" stroke="none" />
              <circle cx={line.x} cy={line.y} r="3" fill="#0b2347" stroke="none" />
            </g>
          ))}
        </svg>
        {callouts.map((c) => (
          <span key={c.n} className={`absolute left-0 flex size-8 items-center justify-center rounded-full bg-[#6ee0ee] text-[15px] font-bold text-white ${c.className}`}>
            {c.n}
          </span>
        ))}
      </div>
    </div>
  );
}
